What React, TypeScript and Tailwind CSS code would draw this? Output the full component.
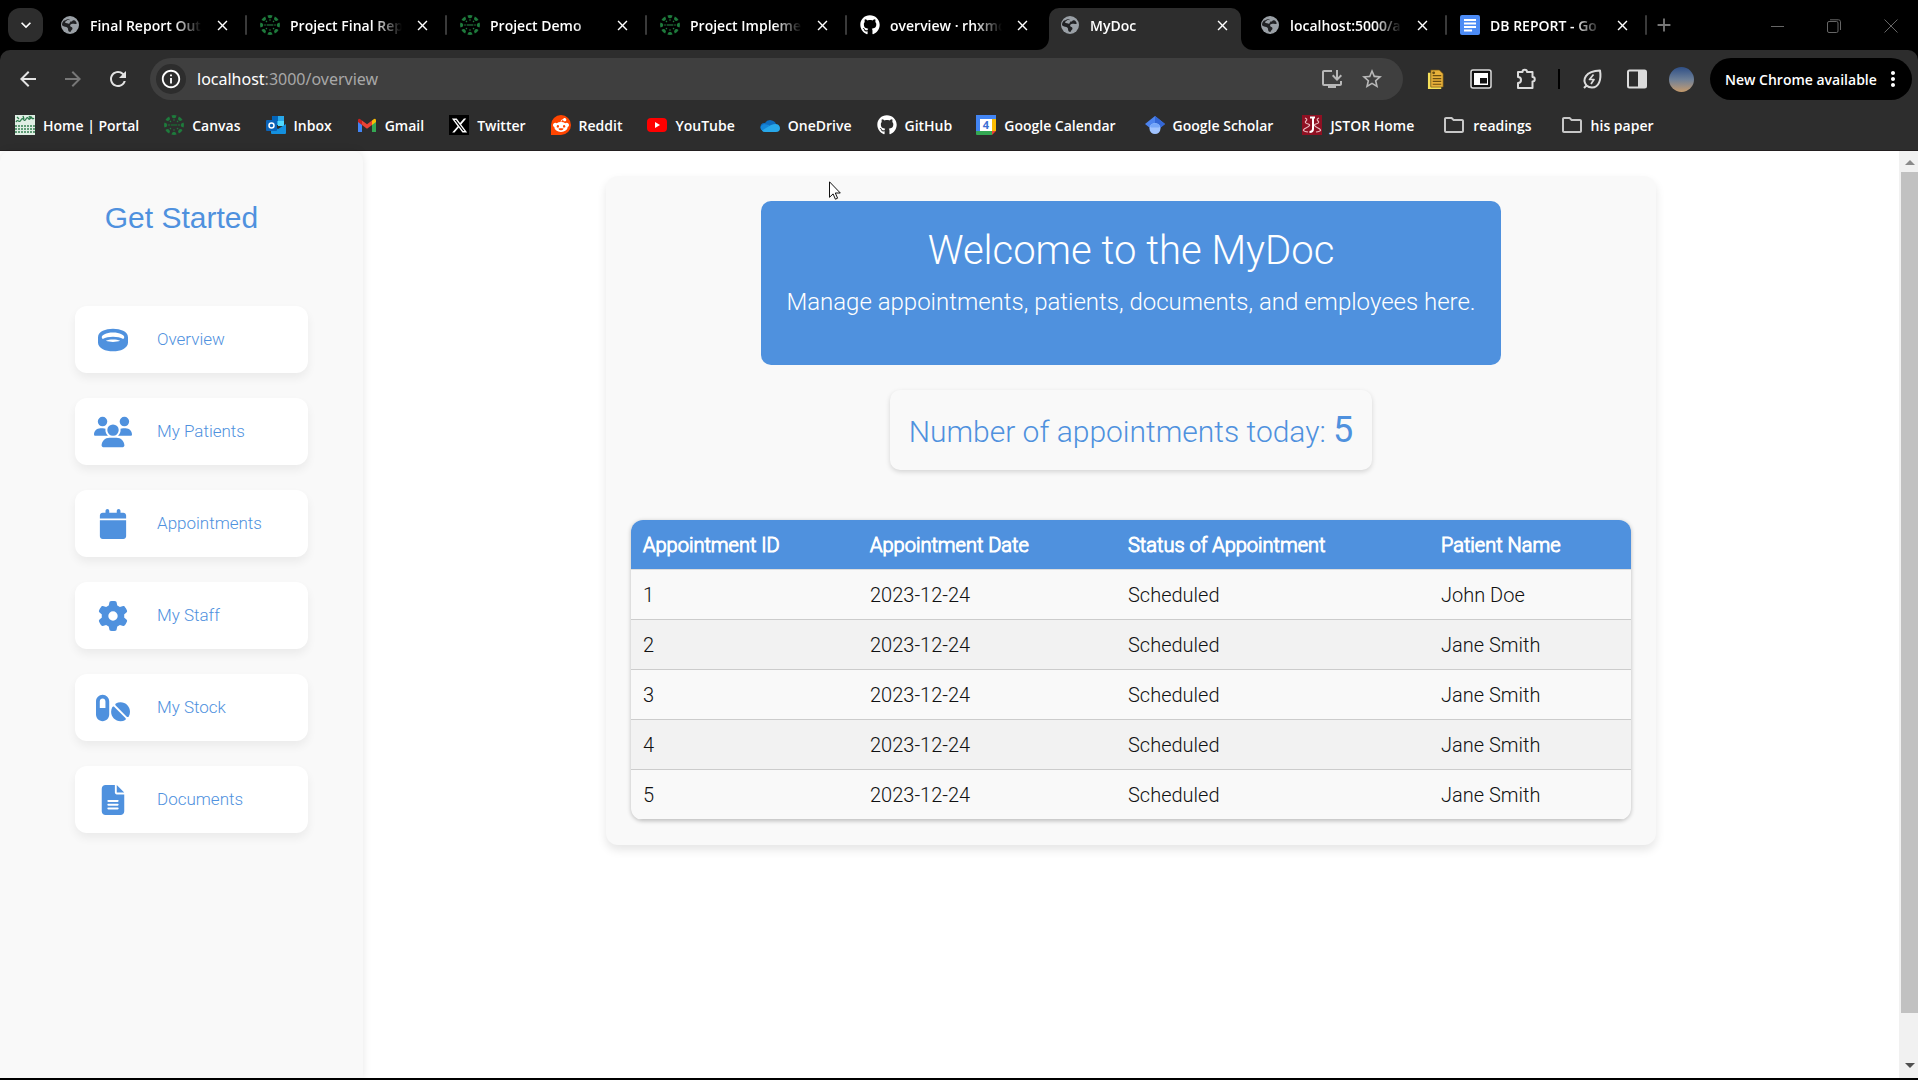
import React, { type ReactNode } from "react";
import { FaRing, FaUsers, FaCalendar, FaGear, FaPills, FaFileLines, FaGithub, FaXTwitter, FaRedditAlien } from "react-icons/fa6";
import { MdClose, MdAdd, MdArrowBack, MdArrowForward, MdRefresh, MdExpandMore, MdInfoOutline, MdInstallDesktop, MdStarBorder, MdOutlineFolder, MdMoreVert } from "react-icons/md";

function Globe() {
  return (
    <svg viewBox="0 0 20 20" className="size-5 shrink-0" aria-hidden="true">
      <circle cx="10" cy="10" r="9" fill="#9aa0a6" />
      <path d="M4 5.5c2 .3 2.200-1.500 4.500-1.500 1.300 0 1 2.200 2.300 2.500 1.700.3 1.200-1.500 3-1.300 1.700.2 2.400 1.600 3 3.300-1.200 1-3 .3-4.300.3-1.500 0-2.700 1-2.300 2.200.4 1.300 2.300.9 2.300 2.400 0 1.600-1.700 1.500-2 3.600C7.200 16.800 8.700 14 7.500 12.800 6.200 11.500 4 12.300 2 10.300c0-2 .7-3.600 2-4.800z" fill="#202124" />
      <path d="M8 4.500c-1 1.500-2.700 1.200-3 3 .8 1.200 3 .6 4.300 1.400C9 7.500 11 7.300 10.500 6 10 5 9 5 8 4.500z" fill="#9aa0a6" />
    </svg>
  );
}

function CanvasLogo() {
  return (
    <svg viewBox="0 0 20 20" className="size-5 shrink-0" aria-hidden="true">
      {[0, 45, 90, 135, 180, 225, 270, 315].map((a) => (
        <g key={a} transform={`rotate(${a} 10 10)`} fill="#1e7b3c">
          <path d="M7.400.5Q10-.3 12.600.5Q12 3.300 10 3.300T7.400.5Z" />
          <circle cx="10" cy="5" r=".8" />
        </g>
      ))}
      <path d="M6.500 10h7M8 9v2M10 9v2M12 9v2" stroke="#1c6133" strokeWidth="1" />
    </svg>
  );
}

function DocsLogo() {
  return (
    <svg viewBox="0 0 20 20" className="size-5 shrink-0" aria-hidden="true">
      <rect width="20" height="20" rx="2" fill="#4c8bf5" />
      <path d="M4 5h12M4 8.500h12M4 12h12M4 15.500h8" stroke="#fff" strokeWidth="1.800" />
    </svg>
  );
}

type Tab = { title: string; icon: ReactNode; active?: boolean; line?: boolean };

const tabs: Tab[] = [
  { title: "Final Report Out", icon: <Globe />, line: true },
  { title: "Project Final Rep", icon: <CanvasLogo />, line: true },
  { title: "Project Demo", icon: <CanvasLogo />, line: true },
  { title: "Project Impleme", icon: <CanvasLogo />, line: true },
  { title: "overview · rhxmo", icon: <FaGithub className="size-5 shrink-0" /> },
  { title: "MyDoc", icon: <Globe />, active: true },
  { title: "localhost:5000/a", icon: <Globe />, line: true },
  { title: "DB REPORT - Go", icon: <DocsLogo />, line: true },
];

function TabItem({ title, icon, active, line }: Tab) {
  return (
    <div className="relative flex h-[42px] w-[200px] shrink items-center pr-2">
      {active && (
        <div className="absolute inset-y-0 left-[2px] right-[6px] rounded-t-[10px] bg-[#2d2d2d]">
          <span className="absolute -left-5 bottom-0 size-5 overflow-hidden">
            <span className="block size-5 rounded-br-[12px] shadow-[6px_6px_0_3px_#2d2d2d]" />
          </span>
          <span className="absolute -right-5 bottom-0 size-5 overflow-hidden">
            <span className="block size-5 rounded-bl-[12px] shadow-[-6px_6px_0_3px_#2d2d2d]" />
          </span>
        </div>
      )}
      <div className="relative flex min-w-0 grow items-center pb-2 pl-[13px]">
        {icon}
        <span className="ml-[10px] w-[112px] whitespace-nowrap [mask-image:linear-gradient(to_right,#000_75%,transparent)]">
          {title}
        </span>
        <button aria-label={`Close ${title}`} className="ml-[10px] grid size-5 place-items-center">
          <MdClose className="size-[17px]" />
        </button>
      </div>
      {line && <span className="absolute right-0 top-[7px] h-5 w-[2px] rounded bg-[#3a3a3a]" />}
    </div>
  );
}

function TabStrip() {
  return (
    <div className="flex h-[50px] items-end bg-black pl-2 text-[14px] font-semibold text-white">
      <button aria-label="Search tabs" className="mb-2 grid h-[34px] w-[35px] shrink-0 place-items-center rounded-[12px] bg-[#2d2d2d]">
        <MdExpandMore className="size-5" />
      </button>
      <div className="ml-1 flex min-w-0">
        {tabs.map((t) => (
          <TabItem key={t.title} {...t} />
        ))}
      </div>
      <button aria-label="New tab" className="mb-[14px] ml-[6px] text-[#777]">
        <MdAdd className="size-[22px]" />
      </button>
      <div className="mb-[17px] ml-auto mr-5 flex items-center gap-[43px] text-[#666]">
        <button aria-label="Minimize" className="h-px w-[13px] bg-[#666]" />
        <button aria-label="Restore">
          <svg viewBox="0 0 14 14" className="size-[14px]" fill="none" stroke="currentColor">
            <rect x=".5" y="2.500" width="10.500" height="11" rx="1.500" />
            <path d="M3 .8h8.500a2 2 0 0 1 2 2V11" />
          </svg>
        </button>
        <button aria-label="Close window">
          <svg viewBox="0 0 14 14" className="size-[14px]" stroke="currentColor">
            <path d="M.5.5l13 13M13.500.5l-13 13" />
          </svg>
        </button>
      </div>
    </div>
  );
}

function Toolbar() {
  return (
    <div className="flex h-[58px] items-center px-[6px]">
      <div className="flex items-center gap-[21px] pl-[10px] text-[#e3e3e3]">
        <button aria-label="Back"><MdArrowBack className="size-6" /></button>
        <button aria-label="Forward" className="text-[#777]"><MdArrowForward className="size-6" /></button>
        <button aria-label="Reload"><MdRefresh className="size-6" /></button>
      </div>
      <div className="ml-5 flex h-[42px] min-w-0 grow items-center rounded-full bg-[#3f3f3f] pl-[6px] pr-[19px]">
        <span className="grid size-[30px] shrink-0 place-items-center rounded-full bg-[#2d2d2d]">
          <MdInfoOutline className="size-[22px]" />
        </span>
        <label className="relative ml-[11px] grow font-['Noto_Sans',sans-serif] text-[16px]">
          <span className="pointer-events-none absolute left-0 top-0 text-white" aria-hidden="true">localhost<span className="text-[#a8a8a8]">:3000/overview</span></span>
          <input aria-label="Address" defaultValue="localhost:3000/overview" className="w-full bg-transparent text-transparent outline-none" />
        </label>
        <div className="flex gap-4 text-[#b8b8b8]">
          <button aria-label="Install app"><MdInstallDesktop className="size-6" /></button>
          <button aria-label="Bookmark page"><MdStarBorder className="size-6" /></button>
        </div>
      </div>
      <div className="ml-[21px] flex shrink-0 items-center text-[#dcdcdc]">
        <button aria-label="Notes extension" className="grid w-6 place-items-center">
          <svg viewBox="0 0 20 22" className="h-[21px] w-[19px]">
            <path d="M1 4h3v14h11v3H1z" fill="#f6e05a" />
            <path d="M4 1h9l4 4v14H4z" fill="#e8b13a" stroke="#6b4e12" strokeWidth=".7" />
            <path d="M6 7h9M6 10h9M6 13h9M6 16h9" stroke="#6b4e12" strokeWidth="1.300" />
            <circle cx="7" cy="4" r="1.500" fill="#6b4e12" />
          </svg>
        </button>
        <button aria-label="Picture in picture" className="ml-[22px]">
          <svg viewBox="0 0 22 20" className="h-5 w-[22px]">
            <rect x="1" y="1" width="20" height="18" rx="2" fill="#111" stroke="currentColor" strokeWidth="1.500" />
            <rect x="4" y="4" width="14" height="12" fill="#fff" />
            <rect x="10" y="9" width="7" height="5.500" fill="#111" />
          </svg>
        </button>
        <button aria-label="Extensions" className="ml-[22px]">
          <svg viewBox="0 0 24 24" className="size-6" fill="none" stroke="currentColor" strokeWidth="2" strokeLinejoin="round">
            <path d="M4 5h4.500a2 2 0 0 1 4.500 0h5.500v5a2 2 0 0 1 0 4.500V21H4v-5a3 3 0 0 0 0-6z" />
          </svg>
        </button>
        <span className="ml-5 h-5 w-[2px] bg-black" />
        <button aria-label="Energy saver" className="ml-5">
          <svg viewBox="0 0 24 24" className="size-6" fill="none" stroke="currentColor" strokeWidth="2" strokeLinejoin="round">
            <path d="M4 21l2.500-2.500C2 13 5 4 20 3.500c1.500 9-1 17-8 17-2 0-4-.6-5.500-2" />
            <path d="M13.500 7.500L9.500 12.500h4.500L11 17" strokeWidth="1.700" />
          </svg>
        </button>
        <button aria-label="Side panel" className="ml-[23px]">
          <svg viewBox="0 0 20 20" className="size-5">
            <rect x="1" y="1.500" width="18" height="17" rx="1.500" fill="none" stroke="currentColor" strokeWidth="2" />
            <rect x="11" y="1.500" width="8" height="17" fill="currentColor" />
          </svg>
        </button>
        <button aria-label="Profile" className="ml-[22px] size-[25px] rounded-full bg-linear-to-b from-[#2f4f86] via-[#6d7f97] to-[#c59a6a]" />
      </div>
      <button className="ml-4 flex h-[42px] w-[202px] shrink-0 items-center justify-between rounded-full bg-black pl-[15px] pr-[7px] text-[14px] font-semibold">
        New Chrome available
        <MdMoreVert className="size-6" />
      </button>
    </div>
  );
}

function Svg({ children }: { children: ReactNode }) {
  return <svg viewBox="0 0 20 20" className="size-5 shrink-0" aria-hidden="true">{children}</svg>;
}

type Bookmark = { name: string; icon: ReactNode };

const sites: Bookmark[] = [
  {
    name: "Home | Portal",
    icon: (
      <Svg>
        <rect width="20" height="20" fill="#dfeee4" />
        <path d="M1 7c2-4 3 2 5-2s3 3 5-1 3 3 4-1 2 3 4 0M2 2l2 2M8 1l1 3M14 1l2 3" stroke="#2b7a4b" strokeWidth="1.300" fill="none" />
        <path d="M0 11h20M0 14h20M0 17h20" stroke="#5f9b76" strokeWidth="2" strokeDasharray="2 1" />
      </Svg>
    ),
  },
  { name: "Canvas", icon: <CanvasLogo /> },
  {
    name: "Inbox",
    icon: (
      <Svg>
        <path d="M6 1h12v9H6z" fill="#28a8ea" />
        <path d="M6 1h6v5H6z" fill="#0364b8" />
        <path d="M12 6h6v5h-6z" fill="#50d9ff" />
        <path d="M5 10l7 4 8-5v9a1 1 0 0 1-1 1H6a1 1 0 0 1-1-1z" fill="#1490df" />
        <rect y="5" width="11" height="11" rx="1" fill="#0a63b8" />
        <circle cx="5.500" cy="10.500" r="2.500" fill="none" stroke="#fff" strokeWidth="1.500" />
      </Svg>
    ),
  },
  {
    name: "Gmail",
    icon: (
      <Svg>
        <path d="M1 5v12h4V8z" fill="#4285f4" />
        <path d="M19 5v12h-4V8z" fill="#34a853" />
        <path d="M15 5.500L17 4q2-1 2 1.500V7l-4 3z" fill="#fbbc04" />
        <path d="M5 5.500L3 4Q1 3 1 5.500V7l4 3z" fill="#c5221f" />
        <path d="M5 5.500l5 3.700 5-3.700V10l-5 3.800L5 10z" fill="#ea4335" />
      </Svg>
    ),
  },
  {
    name: "Twitter",
    icon: <span className="grid size-5 shrink-0 place-items-center bg-black"><FaXTwitter className="size-[17px]" /></span>,
  },
  {
    name: "Reddit",
    icon: <span className="grid size-5 shrink-0 place-items-center rounded-full rounded-bl-none bg-[#ff4500]"><FaRedditAlien className="size-4" /></span>,
  },
  {
    name: "YouTube",
    icon: (
      <Svg>
        <rect y="3" width="20" height="14" rx="4" fill="#f00" />
        <path d="M8 7l5 3-5 3z" fill="#fff" />
      </Svg>
    ),
  },
  {
    name: "OneDrive",
    icon: (
      <Svg>
        <path d="M5 8a6 5.500 0 0 1 11 1l-9 7H4a4 4 0 0 1 1-8z" fill="#0f6cbd" />
        <path d="M4 9l5 1 4 5-9 1.500A4 4 0 0 1 1 11z" fill="#1586d8" />
        <path d="M2 15.500l9-5.500q8-3 9 3 0 4-4 4H5q-2 0-3-1.500z" fill="#28a8ea" />
      </Svg>
    ),
  },
  { name: "GitHub", icon: <FaGithub className="size-5 shrink-0" /> },
];

const research: Bookmark[] = [
  {
    name: "Google Calendar",
    icon: (
      <Svg>
        <path d="M0 0h20v4H0zM0 0h4v16H0z" fill="#4285f4" />
        <path d="M16 4h4v12h-4z" fill="#fbbc04" />
        <path d="M0 16h16v4H1q-1 0-1-1z" fill="#34a853" />
        <path d="M16 16h4l-4 4z" fill="#ea4335" />
        <rect x="4" y="4" width="12" height="12" fill="#fff" />
        <text x="10" y="14" textAnchor="middle" fontSize="11" fontWeight="700" fill="#3b6fd4">4</text>
      </Svg>
    ),
  },
  {
    name: "Google Scholar",
    icon: (
      <Svg>
        <path d="M10 1L0 9l5 4h10l5-4z" fill="#4c83ee" />
        <path d="M10 1l10 8-5 4-5-4z" fill="#3367d6" />
        <circle cx="10" cy="13.500" r="5.500" fill="#a0c3ff" />
        <path d="M5 11.500a5.500 5.500 0 0 1 10 0l-1 1H6z" fill="#76a7fa" />
      </Svg>
    ),
  },
  {
    name: "JSTOR Home",
    icon: (
      <Svg>
        <rect width="20" height="20" fill="#8f1022" />
        <path d="M3 3q3 1 1 3t2 3-2 4 2 4M17 3q-3 1-1 3t-2 3 2 4-2 4" stroke="#e9b9bf" fill="none" strokeWidth="1.200" />
        <path d="M8 2.500h5M11 3v11q0 3-3.500 3" stroke="#fff" strokeWidth="2" fill="none" />
      </Svg>
    ),
  },
  { name: "readings", icon: <MdOutlineFolder className="-mx-px size-6 shrink-0 text-[#c7c7c7]" /> },
  { name: "his paper", icon: <MdOutlineFolder className="-mx-px size-6 shrink-0 text-[#c7c7c7]" /> },
];

function BookmarkLink({ name, icon }: Bookmark) {
  return (
    <a href="#" className="flex shrink-0 items-center gap-2 whitespace-nowrap">
      {icon}
      {name}
    </a>
  );
}

function Bookmarks() {
  return (
    <nav aria-label="Bookmarks" className="flex h-[42px] items-center gap-6 px-[15px] pb-2 text-[14px] font-semibold">
      <div className="flex gap-[25px]">
        {sites.map((b) => <BookmarkLink key={b.name} {...b} />)}
      </div>
      <div className="flex gap-[29px]">
        {research.map((b) => <BookmarkLink key={b.name} {...b} />)}
      </div>
    </nav>
  );
}

const menu = [
  { name: "Overview", Icon: FaRing, size: "size-[30px]" },
  { name: "My Patients", Icon: FaUsers, size: "size-[38px]" },
  { name: "Appointments", Icon: FaCalendar, size: "size-[30px]" },
  { name: "My Staff", Icon: FaGear, size: "size-[30px]" },
  { name: "My Stock", Icon: FaPills, size: "size-[34px]" },
  { name: "Documents", Icon: FaFileLines, size: "size-[30px]" },
];

function Sidebar() {
  return (
    <aside className="w-[363px] shrink-0 rounded-t-[10px] bg-[#f9f9f9] pt-[49px] text-[#4f91de] shadow-[0_0_8px_rgba(0,0,0,0.1)]">
      <h2 className="text-center font-['Liberation_Sans',Arial,sans-serif] text-[30px] leading-9">Get Started</h2>
      <nav className="mt-[70px] flex flex-col gap-[25px] pl-[75px] pr-[55px]">
        {menu.map(({ name, Icon, size }) => (
          <a key={name} href="#" className="flex h-[67px] items-center gap-[25px] rounded-[12px] bg-white pl-[19px] text-[17px] shadow-[0_5px_10px_rgba(0,0,0,0.06)]">
            <span className="grid w-[38px] place-items-center"><Icon className={size} /></span>
            {name}
          </a>
        ))}
      </nav>
    </aside>
  );
}

const appointments = [
  { id: 1, date: "2023-12-24", status: "Scheduled", patient: "John Doe" },
  { id: 2, date: "2023-12-24", status: "Scheduled", patient: "Jane Smith" },
  { id: 3, date: "2023-12-24", status: "Scheduled", patient: "Jane Smith" },
  { id: 4, date: "2023-12-24", status: "Scheduled", patient: "Jane Smith" },
  { id: 5, date: "2023-12-24", status: "Scheduled", patient: "Jane Smith" },
];

function Overview() {
  return (
    <section className="flex w-[1050px] flex-col items-center rounded-[12px] bg-[#f9f9f9] p-[25px] shadow-[0_5px_10px_rgba(0,0,0,0.1)]">
      <header className="rounded-[10px] bg-[#4f91de] px-[25px] pb-12 pt-[25px] text-center text-white">
        <h1 className="text-[40px] leading-[50px]">Welcome to the MyDoc</h1>
        <p className="mt-[11px] text-[24px] leading-[30px]">Manage appointments, patients, documents, and employees here.</p>
      </header>
      <p className="mt-[25px] flex h-[80px] items-center rounded-[10px] bg-[#f9f9f9] px-[19px] pt-[2px] text-[30px] text-[#4f91de] shadow-[0_2px_5px_rgba(0,0,0,0.15)]">
        <span>Number of appointments today: <strong className="text-[36px] font-normal leading-[44px]">5</strong></span>
      </p>
      <div className="mt-[50px] w-full overflow-hidden rounded-[12px] shadow-[0_1px_4px_rgba(0,0,0,0.25)]">
        <table className="w-full table-fixed border-separate border-spacing-0 text-left text-[20px] leading-[24px] text-[#111]">
          <thead>
            <tr className="h-[50px] bg-[#4f91de] text-white *:border-b *:border-[#ddd] *:px-3 *:font-light *:[-webkit-text-stroke:1px_white]">
              <th className="w-[227px]">Appointment ID</th>
              <th className="w-[258px]">Appointment Date</th>
              <th className="w-[313px]">Status of Appointment</th>
              <th>Patient Name</th>
            </tr>
          </thead>
          <tbody>
            {appointments.map((a) => (
              <tr key={a.id} className="h-[50px] *:border-b *:border-[#ccc] *:px-3 even:bg-[#f2f2f2]">
                <td>{a.id}</td>
                <td>{a.date}</td>
                <td>{a.status}</td>
                <td>{a.patient}</td>
              </tr>
            ))}
          </tbody>
        </table>
      </div>
    </section>
  );
}

function Scrollbar() {
  return (
    <div aria-hidden="true" className="flex w-[19px] shrink-0 flex-col items-end bg-[#f1f1f1]">
      <span className="grid h-[21px] w-[17px] place-items-center">
        <svg viewBox="0 0 10 6" className="w-[10px]"><path d="M0 6l5-5 5 5z" fill="#8a8a8a" /></svg>
      </span>
      <span className="w-[17px] grow bg-[#c1c1c1]" />
      <span className="grid h-[65px] w-[17px] place-items-end justify-center pb-[9px]">
        <svg viewBox="0 0 10 6" className="w-[10px]"><path d="M0 0l5 5 5-5z" fill="#505050" /></svg>
      </span>
    </div>
  );
}

export default function App() {
  return (
    <div className="flex min-h-screen flex-col border-b-2 border-black bg-white">
      <div className="bg-black font-['Open_Sans',sans-serif] text-white">
        <TabStrip />
        <div className="rounded-t-[10px] border-b border-[#231f20] bg-[#2d2d2d]">
          <Toolbar />
          <Bookmarks />
        </div>
      </div>
      <div className="relative flex grow font-['Roboto',sans-serif] font-light">
        <Sidebar />
        <main className="flex grow items-start justify-center pt-[25px]">
          <Overview />
        </main>
        <Scrollbar />
        <svg viewBox="0 0 12 19" className="absolute left-[829px] top-[30px] h-[19px] w-3" aria-hidden="true">
          <path d="M.5.8v15.500l3.600-3.400 2.300 5.300 2.200-1L6.300 12h5z" fill="#fff" stroke="#111" strokeWidth="1" />
        </svg>
      </div>
    </div>
  );
}
